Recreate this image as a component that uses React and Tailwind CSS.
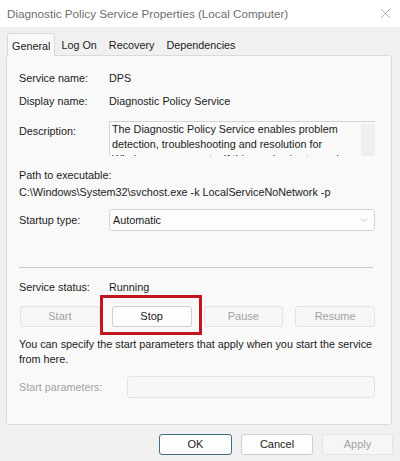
import { X, ChevronDown } from "lucide-react";

function Btn({ children, disabled, className = "" }) {
  return (
    <div
      className={`flex h-[21px] items-center justify-center rounded-[3px] border text-[11px] ${
        disabled
          ? "border-[#e3e3e3] bg-[#f6f6f6] text-[#a3a3a3]"
          : "border-[#d0d0d0] bg-[#fdfdfd] text-[#1b1b1b]"
      } ${className}`}
    >
      {children}
    </div>
  );
}

function Row({ label, children, className = "" }) {
  return (
    <div className={`flex items-center ${className}`}>
      <div className="w-[90px] shrink-0">{label}</div>
      {children}
    </div>
  );
}

export default function App() {
  return (
    <div
      className="flex h-[461px] w-[400px] flex-col overflow-hidden bg-[#f0f0f0] text-[10.8px] leading-[15px] text-[#1b1b1b]"
      style={{ fontFamily: '"Liberation Sans", Arial, sans-serif' }}
    >
      {/* title bar */}
      <div className="flex h-[27px] shrink-0 items-center justify-between bg-white pl-[7px] pr-[6px]">
        <span className="text-[11.7px] text-[#6e6e6e]">
          Diagnostic Policy Service Properties (Local Computer)
        </span>
        <X size={17} strokeWidth={1} className="text-[#8a8a8a]" />
      </div>

      {/* tabs */}
      <div className="mt-[6px] flex items-end pl-[7px]">
        <div className="relative z-10 -mb-px flex h-[23px] items-center rounded-t-[3px] border border-b-0 border-[#d9d9d9] bg-[#f9f9f9] px-[4px] pt-[3px]">
          General
        </div>
        <div className="flex h-[21px] items-center px-[6px] pt-[2px]">
          Log On
        </div>
        <div className="flex h-[21px] items-center px-[6px] pt-[2px]">
          Recovery
        </div>
        <div className="flex h-[21px] items-center px-[6px] pt-[2px]">
          Dependencies
        </div>
      </div>

      {/* panel */}
      <div className="ml-[6px] mr-[8px] h-[370px] shrink-0 rounded-[3px] border border-[#dadada] bg-[#f9f9f9] pl-[12px] pr-[16px] pt-[15px]">
        <Row label="Service name:">DPS</Row>
        <Row label="Display name:" className="mt-[8px]">
          Diagnostic Policy Service
        </Row>

        <div className="mt-[12px] flex items-start">
          <div className="w-[90px] shrink-0 pt-[3px]">Description:</div>
          <div className="flex h-[35px] flex-1 overflow-hidden border-l border-t border-[#d3d3d3]">
            <div className="flex-1 overflow-hidden pl-[2px]">
              The Diagnostic Policy Service enables problem
              <br />
              detection, troubleshooting and resolution for
              <br />
              Windows components. If this service is stopped
            </div>
            <div className="mt-[2px] w-[14px] shrink-0 bg-[#efefef]" />
          </div>
        </div>

        <div className="mt-[12px]">Path to executable:</div>
        <div className="mt-[2px]">
          C:\Windows\System32\svchost.exe -k LocalServiceNoNetwork -p
        </div>

        <Row label="Startup type:" className="mt-[9px]">
          <div className="flex h-[22px] flex-1 items-center justify-between rounded-[3px] border border-[#d3d3d3] bg-[#fdfdfd] pl-[3px] pr-[4px]">
            <span>Automatic</span>
            <ChevronDown size={12} strokeWidth={1} className="text-[#8a8a8a]" />
          </div>
        </Row>

        <div className="mr-[2px] mt-[36px] border-t border-[#c9c9c9]" />

        <Row label="Service status:" className="mt-[12px]">
          Running
        </Row>

        <div className="mt-[11px] grid grid-cols-4 gap-[12px] pl-px">
          <Btn disabled>Start</Btn>
          <div className="relative">
            <Btn>Stop</Btn>
            <div className="absolute -bottom-[8px] -left-[12px] -right-[10px] -top-[11px] border-[3px] border-[#c2161f]" />
          </div>
          <Btn disabled>Pause</Btn>
          <Btn disabled>Resume</Btn>
        </div>

        <div className="mt-[10px] whitespace-nowrap">
          You can specify the start parameters that apply when you start the
          service
          <br />
          from here.
        </div>

        <div className="mt-[9px] flex items-center">
          <div className="w-[108px] shrink-0 text-[#a3a3a3]">
            Start parameters:
          </div>
          <div className="h-[22px] flex-1 rounded-[3px] border border-[#e3e3e3] bg-[#f7f7f7]" />
        </div>
      </div>

      {/* dialog buttons */}
      <div className="mt-[9px] flex justify-end gap-[9px] pr-[7px]">
        <Btn className="w-[73px] !border-[#3e6f85]">OK</Btn>
        <Btn className="w-[72px]">Cancel</Btn>
        <Btn disabled className="w-[71px]">
          Apply
        </Btn>
      </div>
    </div>
  );
}
